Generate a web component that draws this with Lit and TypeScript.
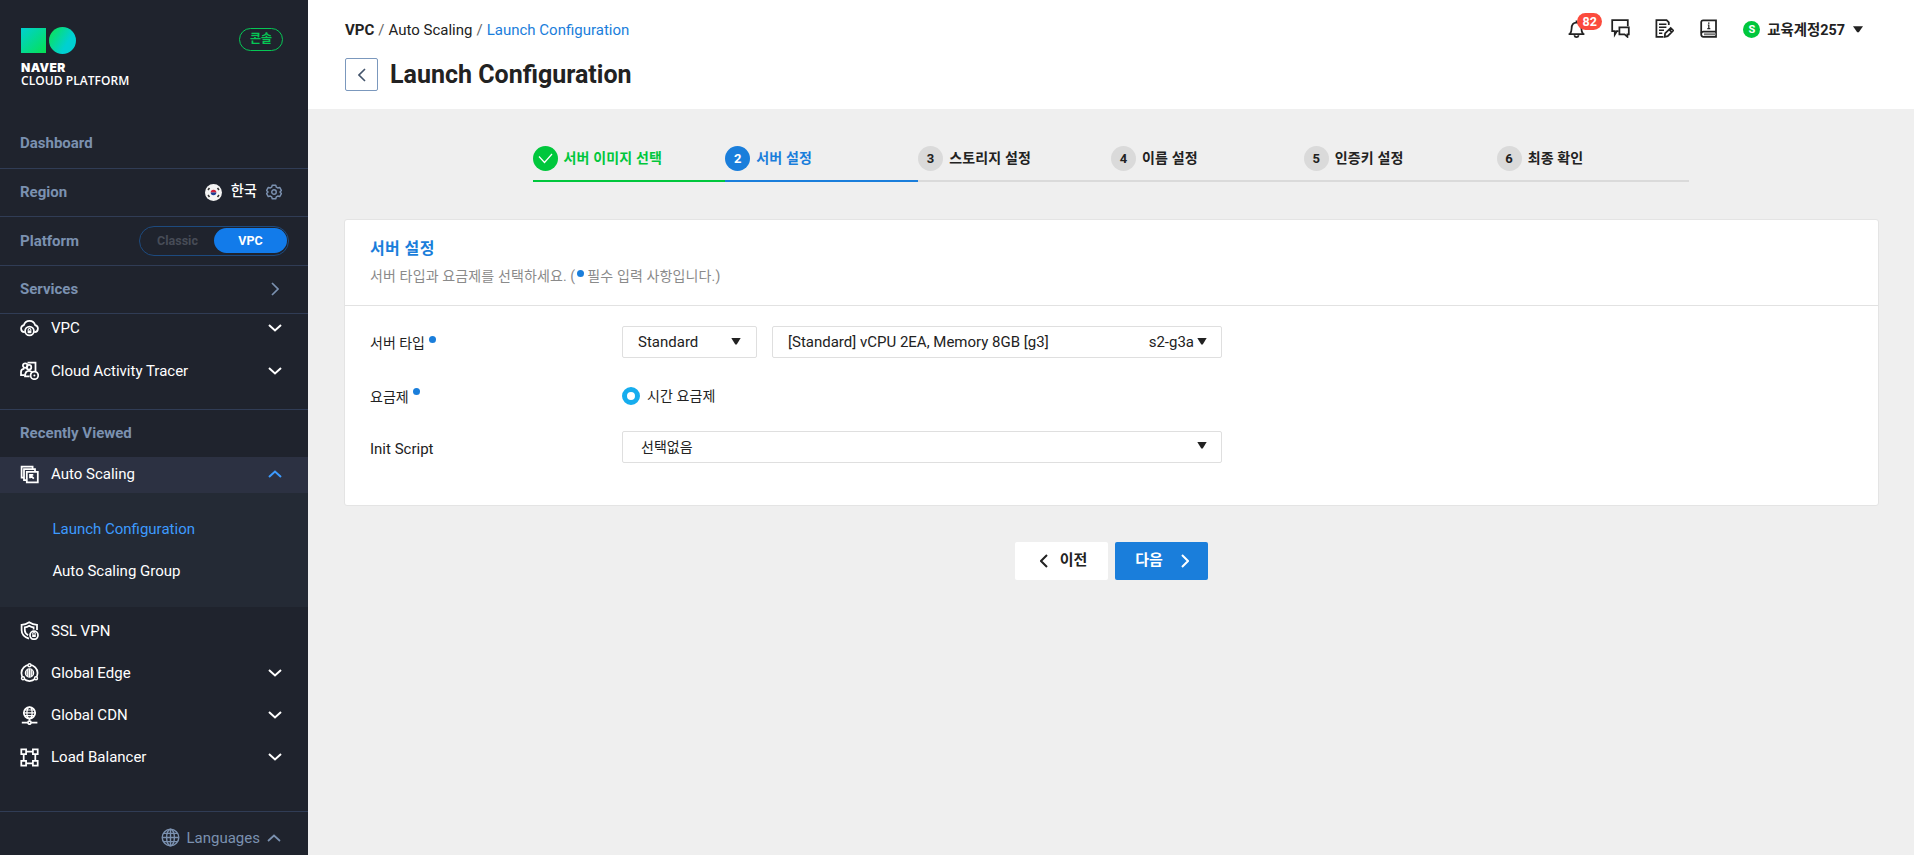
import { LitElement, html, css, svg, TemplateResult } from "lit";
import { customElement, property } from "lit/decorators.js";
import { classMap } from "lit/directives/class-map.js";

const glyphs: Record<string, TemplateResult> = {
  vpc: svg`<path d="M4.800 13.200H4.400a3.600 3.600 0 0 1-.5-7.100 5.800 5.800 0 0 1 11.200 0 3.600 3.600 0 0 1-.5 7.100H14.200"/><circle cx="9.500" cy="12" r="4.400"/><path d="M8.200 11.400v-.6a1.300 1.300 0 0 1 2.600 0v.6" stroke-width="1.200"/><path d="M7.600 11.400h3.800v2.800H7.600z" fill="currentColor" stroke="none"/>`,
  tracer: svg`<path d="M7.500 1.600h8v8.400"/><circle cx="5.200" cy="4.600" r="2.300"/><path d="M4.600 14H1V11c0-2 1.400-3.200 3.400-3.400"/><circle cx="9" cy="6.200" r="2.300"/><path d="M9.600 15.400H5c0-3.400 1.600-5.600 4-5.600 1.400 0 2.200.5 2.800 1.300"/><circle cx="14.400" cy="14.400" r="3.800"/><circle cx="14.400" cy="14.400" r="1" fill="currentColor" stroke="none"/>`,
  scaling: svg`<path d="M4 12.700H1.600V1.600h11V4"/><path d="M6.400 15.200H4V4.200h11v2.400"/><path d="M6.800 6.800h11v10.600h-11z"/><path d="M10 13.200V9.900h3.300M10.200 10.100l3.600 3.600"/>`,
  ssl: svg`<path d="M17 9V3.900C14 3.700 11.600 2.800 9.200 1.200 6.900 2.800 4.400 3.700 1.600 3.900v5.300c0 4 2.600 6.700 7.400 8.400"/><path d="M13.600 8.500V6.300C12 6.100 10.600 5.600 9.200 4.700 7.900 5.600 6.400 6.100 4.800 6.300v3c0 2.200 1.200 3.700 3.300 4.800"/><circle cx="14" cy="14.200" r="4"/><path d="M12.700 13.600v-.8a1.300 1.300 0 0 1 2.600 0v.8" stroke-width="1.100"/><path d="M12.200 13.500h3.600v2.600h-3.600z" fill="currentColor" stroke="none"/>`,
  edge: svg`<circle cx="9.500" cy="10" r="8.100"/><circle cx="9.500" cy="10" r="4.100" stroke-width="1.300"/><path d="M5.500 10h8M9.500 6v8M6.200 8h6.600M6.200 12h6.600M7.700 6.600v6.800M11.300 6.600v6.800" stroke-width="1"/><g fill="#1f232d" stroke-width="1.400"><circle cx="9.500" cy="2.300" r="1.500"/><circle cx="3" cy="15.300" r="1.500"/><circle cx="16" cy="15.300" r="1.500"/></g>`,
  cdn: svg`<circle cx="9.500" cy="6.800" r="5.700"/><ellipse cx="9.500" cy="6.800" rx="2.600" ry="5.700" stroke-width="1.300"/><path d="M3.800 6.800h11.400M4.700 4h9.600M4.700 9.600h9.600" stroke-width="1.200"/><path d="M9.500 12.500v2.300M1.800 16.600h5.800M11.400 16.600h6"/><circle cx="9.500" cy="16.600" r="1.600"/>`,
  lb: svg`<path d="M1.300 1.300h4.800v4.800H1.300zM12.900 1.300h4.800v4.800h-4.800zM1.300 12.900h4.800v4.800H1.300zM12.900 12.900h4.800v4.800h-4.800zM6.100 3.700h6.800M6.100 15.300h6.800M3.700 6.100v6.800M15.300 6.100v6.800"/>`,
  globe: svg`<circle cx="9.500" cy="9.500" r="8.300"/><ellipse cx="9.500" cy="9.500" rx="3.900" ry="8.300"/><path d="M1.200 9.500h16.600M9.500 1.200v16.600M2.500 5.400h14M2.500 13.600h14"/>`,
  gear: svg`<path d="M7.400 1.400h4.200l.7 2.400 1.600.9 2.400-.6 2 3.600-1.700 1.800 1.700 1.800-2 3.600-2.400-.6-1.600.9-.7 2.400H7.400l-.7-2.400-1.600-.9-2.400.6-2-3.600 1.700-1.800L.7 7.700l2-3.600 2.400.6 1.600-.9z" stroke-linejoin="round"/><circle cx="9.500" cy="9.500" r="2.700"/>`,
  bell: svg`<path d="M1.600 15h15.800M3 14.800c1.200-1.500 1.600-2.700 1.600-5.300C4.600 5.700 6.400 3.500 9.500 3.500s4.900 2.200 4.900 6c0 2.600.4 3.800 1.600 5.300M9.500 3.300V1.400M7.300 16.200c.4 1.400 1.200 1.900 2.200 1.900s1.800-.5 2.200-1.900"/>`,
  chat: svg`<path d="M7.600 12.200H5.800l-2 3.400v-3.400H1.200V1.200h15.600v6"/><path d="M8.400 8.300h9.400v7h-1.400v2.500l-2.800-2.500H8.400z"/>`,
  note: svg`<path d="M13.800 6V3.400L11.600 1.200H1.400v16.600h7"/><path d="M4 5.300h7.400M4 8.300h7.400M4 11.300h5M4 14.300h3.300" stroke-width="1.400"/><path d="M9.700 17.800l.4-3.300 5.600-5.600 2.600 2.600-5.600 5.600zM14.200 10.600l2.300 2.300"/>`,
  book: svg`<path d="M17 1.300H4.200c-1.300 0-2 .7-2 2v12.300c0 1.400.8 2.200 2.200 2.200H17z"/><path d="M2.300 14.300c.3-1.200 1-1.600 2.100-1.600H17"/><path d="M5 15.300H17" stroke="#777" stroke-width="2"/><path d="M8.800 6h1v3.400M8.300 9.700h3" stroke-width="1.200"/><path d="M9 3.400h1.500v1.400H9z" fill="currentColor" stroke="none"/>`,
};

@customElement("line-icon")
class LineIcon extends LitElement {
  @property() name = "";
  @property({ type: Number }) size = 19;
  @property({ type: Number }) weight = 1.75;
  static styles = css`
    :host { display: block; flex: none; line-height: 0; }
    svg { display: block; }
  `;
  render() {
    return html`<svg width=${this.size} height=${this.size} viewBox="0 0 19 19" fill="none" stroke="currentColor" stroke-width=${this.weight}>${glyphs[this.name]}</svg>`;
  }
}

@customElement("chevron-icon")
class ChevronIcon extends LitElement {
  @property() dir = "down";
  @property({ type: Number }) weight = 2;
  static styles = css`
    :host { display: block; flex: none; }
    svg { display: block; }
  `;
  render() {
    const shapes: Record<string, [number, number, string]> = {
      down: [14, 8, "M1 1l6 5.500L13 1"],
      up: [14, 8, "M1 7l6-5.500L13 7"],
      right: [8, 14, "M1 1l6 6-6 6"],
      left: [8, 14, "M7 1L1 7l6 6"],
    };
    const [w, h, d] = shapes[this.dir];
    return html`<svg width=${w} height=${h} viewBox="0 0 ${w} ${h}" fill="none" stroke="currentColor" stroke-width=${this.weight}><path d=${d} /></svg>`;
  }
}

@customElement("side-bar")
class SideBar extends LitElement {
  static styles = css`
    :host { display: flex; flex-direction: column; width: 308px; height: 855px; box-sizing: border-box; background: #1f232d; color: #fff; font-size: 15px; flex: none; }
    .brand { height: 119px; box-sizing: border-box; padding: 27px 25px 0 21px; display: flex; justify-content: space-between; align-items: flex-start; }
    .mark { display: block; }
    .word { font: 900 12px/13px "Inter", sans-serif; margin-top: 7px; letter-spacing: 0.400px; }
    .word2 { font: 600 12px/13px "Open Sans", sans-serif; white-space: nowrap; letter-spacing: 0.060px; }
    .pill { box-sizing: border-box; width: 44px; height: 23px; margin-top: 1px; border: 1px solid #06c755; border-radius: 12px; color: #06c755; font-size: 12px; line-height: 20px; text-align: center; font-weight: 700; }
    .row { display: flex; align-items: center; box-sizing: border-box; padding: 0 25px 1px 20px; color: #7b91b0; font-weight: 700; font-size: 15px; border-bottom: 1px solid #303c55; }
    .h50 { height: 50px; }
    .h48 { height: 48px; }
    .h49 { height: 49px; }
    .row .end { margin-left: auto; display: flex; align-items: center; }
    .flag { display: block; margin-right: 9px; }
    .land { color: #fff; font-weight: 500; font-size: 14.300px; line-height: 20px; padding-bottom: 2px; margin-right: 9px; }
    .gear { margin-right: 1px; }
    .toggle { width: 150px; height: 30px; box-sizing: border-box; border: 1px solid #1d4a7e; border-radius: 15px; display: flex; align-items: center; font-size: 12.500px; padding: 1px; margin-right: -6px; }
    .toggle span { flex: 1; text-align: center; color: #474c57; line-height: 25px; }
    .toggle .on { background: #127bea; color: #fff; border-radius: 13px; }
    .next { margin-right: 4px; }
    .group { display: flex; flex-direction: column; gap: 14.500px; height: 95px; border-bottom: 1px solid #303c55; }
    .item { display: flex; align-items: center; height: 28px; padding: 0 26px 0 20px; }
    .item span { margin-left: 12px; flex: 1; }
    .recent { height: 47px; border: 0; }
    .open { height: 36px; background: #2c3142; box-sizing: border-box; padding-bottom: 2px; }
    .open chevron-icon { color: #3d9bff; }
    .sub { background: #242a35; height: 114px; box-sizing: border-box; padding: 15px 0 0 52.400px; line-height: 42px; }
    .sub .here { color: #3d9bff; }
    .tail { padding-top: 9.500px; display: flex; flex-direction: column; gap: 14.300px; }
    .langs { margin-top: auto; height: 44px; box-sizing: border-box; border-top: 1px solid #303c55; display: flex; justify-content: flex-end; align-items: center; padding: 8px 27px 0 0; color: #7b91b0; gap: 7px; }
  `;
  private item(icon: string, label: string, arrow = true) {
    return html`<div class="item"><line-icon name=${icon}></line-icon><span>${label}</span>${arrow ? html`<chevron-icon></chevron-icon>` : ""}</div>`;
  }
  render() {
    return html`
      <div class="brand">
        <div>
          <svg class="mark" width="55" height="27" viewBox="0 0 55 27">
            <defs>
              <linearGradient id="sq" x1="0" y1="0" x2="1" y2="1"><stop offset="0" stop-color="#00d0d2" /><stop offset="1" stop-color="#06e252" /></linearGradient>
              <linearGradient id="ci" x1="0" y1=".2" x2=".75" y2=".65"><stop offset="0" stop-color="#0be35a" /><stop offset=".9" stop-color="#00d0d2" /></linearGradient>
            </defs>
            <rect x="0" y="1" width="25" height="25" fill="url(#sq)" /><circle cx="41.500" cy="13.500" r="13.500" fill="url(#ci)" />
          </svg>
          <div class="word">NAVER</div>
          <div class="word2">CLOUD PLATFORM</div>
        </div>
        <div class="pill">콘솔</div>
      </div>
      <div class="row h50">Dashboard</div>
      <div class="row h48">Region
        <div class="end">
          <svg class="flag" width="17" height="17" viewBox="0 0 17 17"><circle cx="8.500" cy="8.500" r="8.500" fill="#f4f4f4" /><path d="M5.700 8.500a2.800 2.800 0 0 1 5.600 0z" fill="#d0213c" /><path d="M5.700 8.500a2.800 2.800 0 0 0 5.600 0z" fill="#1c3f94" /><path d="M3 6l1.500-2M12.500 4L14 6M3 11l1.500 2M12.500 13l1.500-2" stroke="#333" stroke-width="1.500" /></svg>
          <span class="land">한국</span><line-icon class="gear" name="gear" size="16" weight="1.700"></line-icon>
        </div>
      </div>
      <div class="row h49">Platform<div class="end"><div class="toggle"><span>Classic</span><span class="on">VPC</span></div></div></div>
      <div class="row h48">Services<div class="end"><chevron-icon class="next" dir="right" weight="1.700"></chevron-icon></div></div>
      <div class="group">${this.item("vpc", "VPC")}${this.item("tracer", "Cloud Activity Tracer")}</div>
      <div class="row recent">Recently Viewed</div>
      <div class="item open"><line-icon name="scaling"></line-icon><span>Auto Scaling</span><chevron-icon dir="up"></chevron-icon></div>
      <div class="sub"><div class="here">Launch Configuration</div><div>Auto Scaling Group</div></div>
      <div class="tail">${this.item("ssl", "SSL VPN", false)}${this.item("edge", "Global Edge")}${this.item("cdn", "Global CDN")}${this.item("lb", "Load Balancer")}</div>
      <div class="langs"><line-icon name="globe" weight="1.400"></line-icon><span>Languages</span><chevron-icon dir="up" weight="1.700"></chevron-icon></div>
    `;
  }
}

@customElement("top-header")
class TopHeader extends LitElement {
  static styles = css`
    :host { display: flex; justify-content: space-between; height: 109px; box-sizing: border-box; background: #fff; padding: 0 51px 0 37px; }
    .crumbs { margin-top: 19px; line-height: 22px; font-size: 15px; white-space: pre; }
    .crumbs i { font-style: normal; color: #666; letter-spacing: 0.200px; }
    .crumbs .here { color: #1a7edb; }
    .title { display: flex; align-items: center; margin-top: 17px; }
    .back { box-sizing: border-box; width: 33px; height: 33px; border: 1px solid #7b98bd; border-radius: 2px; display: flex; align-items: center; justify-content: center; color: #43546b; }
    h1 { margin: 1px 0 0 12px; font-size: 25px; line-height: 30px; font-weight: 700; }
    .tools { display: flex; align-items: center; height: 56px; }
    .bell { position: relative; margin-right: 25px; }
    .badge { position: absolute; left: 10px; top: -6px; width: 25px; height: 17px; border-radius: 9px; background: #fb4b3d; color: #fff; font: 700 12.500px/17px Roboto, sans-serif; text-align: center; }
    .gap { margin-right: 25px; }
    .book { margin-right: 25px; }
    .face { width: 17px; height: 17px; border-radius: 50%; background: #00c73c; color: #fff; font: 700 11px/17px Roboto, sans-serif; text-align: center; margin: 3px 7px 0 0; }
    .user { font-size: 14.400px; font-weight: 700; margin-top: 1px; }
    .tri { margin: 3px 0 0 8px; }
  `;
  render() {
    return html`
      <div>
        <div class="crumbs"><b>VPC</b><i> / </i>Auto Scaling<i> / </i><span class="here">Launch Configuration</span></div>
        <div class="title"><div class="back"><chevron-icon dir="left" weight="1.600"></chevron-icon></div><h1>Launch Configuration</h1></div>
      </div>
      <div class="tools">
        <div class="bell"><line-icon name="bell"></line-icon><div class="badge">82</div></div>
        <line-icon class="gap" name="chat"></line-icon>
        <line-icon class="gap" name="note"></line-icon>
        <line-icon class="book" name="book"></line-icon>
        <div class="face">S</div><div class="user">교육계정257</div>
        <svg class="tri" width="10" height="7" viewBox="0 0 10 7"><path d="M0 .3h10L5.800 6.300H4.200z" fill="#222" /></svg>
      </div>
    `;
  }
}

@customElement("select-box")
class SelectBox extends LitElement {
  @property() label = "";
  @property() note = "";
  static styles = css`
    :host { display: flex; align-items: center; box-sizing: border-box; height: 32px; border: 1px solid #dfdfdf; border-radius: 2px; background: #fff; padding: 0 14px 1px 15px; font-size: 15px; }
    .label { flex: 1; white-space: nowrap; }
    svg { display: block; margin-left: 3px; }
  `;
  render() {
    return html`<span class="label">${this.label}</span><span>${this.note}</span><svg width="10" height="7" viewBox="0 0 10 7"><path d="M.3 0h9.400L5.700 6.500H4.300z" fill="#222" /></svg>`;
  }
}

@customElement("app-root")
class AppRoot extends LitElement {
  static styles = css`
    :host { display: flex; width: 1914px; height: 855px; overflow: hidden; background: #efefef; color: #222; font-family: Roboto, "Noto Sans CJK KR", sans-serif; font-size: 14px; }
    main { flex: 1; min-width: 0; }
    .steps { display: flex; width: 1157px; margin: 37px 0 0 224.500px; }
    .step { flex: 1; height: 36px; box-sizing: border-box; border-bottom: 2px solid #dadada; display: flex; align-items: flex-start; font-weight: 700; line-height: 25px; font-size: 14px; letter-spacing: 0.150px; padding-bottom: 9px; }
    .dot { width: 25px; height: 25px; border-radius: 50%; background: #dadada; margin-right: 6px; display: flex; align-items: center; justify-content: center; font-size: 13px; }
    .done { border-color: #00c73c; color: #00c73c; }
    .done .dot { background: #00c73c; }
    .now { border-color: #1a7edb; color: #1a7edb; }
    .now .dot { background: #1a7edb; color: #fff; }
    .card { margin: 37px 35px 0 36px; box-sizing: border-box; height: 287px; background: #fff; border: 1px solid #e4e4e4; border-radius: 3px; }
    .head { height: 86px; box-sizing: border-box; border-bottom: 1px solid #e2e2e2; padding: 16px 25px 0; }
    h2 { margin: 0; font-size: 16px; line-height: 26px; color: #1a7edb; font-weight: 700; letter-spacing: 0.400px; }
    .desc { color: #8a8a8a; line-height: 20px; margin-top: 4px; display: flex; white-space: pre; letter-spacing: 0.130px; }
    .req { width: 7px; height: 7px; border-radius: 50%; background: #1a7edb; flex: none; }
    .desc .req { margin: 4px 3px 0 2px; }
    .line { display: flex; height: 32px; padding-left: 25px; }
    .name { width: 252px; display: flex; line-height: 32px; padding-top: 1px; }
    .name .req { margin: 9px 0 0 4px; }
    .eng { font-size: 15px; padding-top: 2px; }
    .one { margin-top: 20px; }
    .two { margin-top: 22px; }
    .two .name .req { margin-top: 7px; }
    .three { margin-top: 19px; }
    .kind { width: 135px; margin-right: 15px; padding-right: 15px; }
    .spec { width: 450px; }
    .init { width: 600px; font-size: 14px; padding: 0 14px 3px 18px; }
    .radio { width: 18px; height: 18px; box-sizing: border-box; border: 5px solid #16adee; border-radius: 50%; margin: 7px 7px 0 0; }
    .opt { line-height: 32px; letter-spacing: 0.100px; }
    .acts { display: flex; gap: 7px; margin: 36px 0 0 707px; }
    .btn { width: 93px; height: 38px; border-radius: 2px; background: #fff; display: flex; align-items: center; justify-content: center; font-size: 15px; line-height: 20px; font-weight: 700; box-sizing: border-box; }
    .btn span { padding-bottom: 2px; }
    .btn chevron-icon { margin-bottom: 1px; }
    .prev { gap: 12px; padding-left: 4px; }
    .go { background: #1a7edb; color: #fff; gap: 18px; padding-left: 1px; }
  `;
  private steps = ["서버 이미지 선택", "서버 설정", "스토리지 설정", "이름 설정", "인증키 설정", "최종 확인"];
  render() {
    return html`
      <side-bar></side-bar>
      <main>
        <top-header></top-header>
        <div class="steps">
          ${this.steps.map((label, i) => html`<div class=${classMap({ step: true, done: i === 0, now: i === 1 })}>
            <div class="dot">${i === 0 ? html`<svg width="15" height="11" viewBox="0 0 15 11" fill="none" stroke="#fff" stroke-width="1.200"><path d="M1 3.500l5.500 6L14 1" /></svg>` : i + 1}</div>${label}</div>`)}
        </div>
        <div class="card">
          <div class="head">
            <h2>서버 설정</h2>
            <div class="desc">서버 타입과 요금제를 선택하세요. (<span class="req"></span>필수 입력 사항입니다.)</div>
          </div>
          <div class="line one"><div class="name">서버 타입<span class="req"></span></div><select-box class="kind" label="Standard"></select-box><select-box class="spec" label="[Standard] vCPU 2EA, Memory 8GB [g3]" note="s2-g3a"></select-box></div>
          <div class="line two"><div class="name">요금제<span class="req"></span></div><span class="radio"></span><span class="opt">시간 요금제</span></div>
          <div class="line three"><div class="name eng">Init Script</div><select-box class="init" label="선택없음"></select-box></div>
        </div>
        <div class="acts">
          <div class="btn prev"><chevron-icon dir="left"></chevron-icon><span>이전</span></div>
          <div class="btn go"><span>다음</span><chevron-icon dir="right"></chevron-icon></div>
        </div>
      </main>
    `;
  }
}
